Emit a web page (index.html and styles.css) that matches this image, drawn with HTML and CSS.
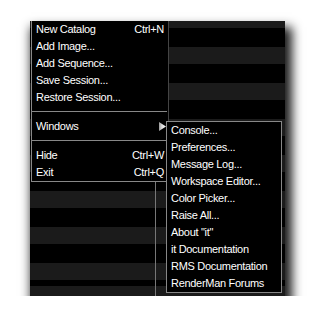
FILE: index.html
```html
<!DOCTYPE html>
<html lang="en">
<head>
<meta charset="UTF-8">
<meta name="viewport" content="width=device-width, initial-scale=1.0">
<title>it - Menu</title>
<link rel="stylesheet" href="styles.css">
</head>
<body>
    <div class="window">
        <div class="table">
            <div class="col-name"></div>
            <div class="col-rest"></div>
        </div>

        <div class="menu main-menu">
            <div class="item"><span>New Catalog</span><span class="key">Ctrl+N</span></div>
            <div class="item"><span>Add Image...</span></div>
            <div class="item"><span>Add Sequence...</span></div>
            <div class="item"><span>Save Session...</span></div>
            <div class="item"><span>Restore Session...</span></div>
            <div class="sep"></div>
            <div class="item sub">
                <span>Windows</span>
                <svg class="arrow" width="7" height="9" viewBox="0 0 7 9">
                    <defs>
                        <linearGradient id="arrowShade" x1="0" x2="1" y1="0" y2="0">
                            <stop offset="0" stop-color="#9a9a9a"/>
                            <stop offset="0.4" stop-color="#d8d8d8"/>
                            <stop offset="1" stop-color="#ffffff"/>
                        </linearGradient>
                    </defs>
                    <polygon points="0,0 7,4.5 0,9" fill="url(#arrowShade)"/>
                </svg>
            </div>
            <div class="sep"></div>
            <div class="item"><span>Hide</span><span class="key">Ctrl+W</span></div>
            <div class="item"><span>Exit</span><span class="key">Ctrl+Q</span></div>
        </div>

        <div class="menu sub-menu">
            <div class="item"><span>Console...</span></div>
            <div class="item"><span>Preferences...</span></div>
            <div class="item"><span>Message Log...</span></div>
            <div class="item"><span>Workspace Editor...</span></div>
            <div class="item"><span>Color Picker...</span></div>
            <div class="item"><span>Raise All...</span></div>
            <div class="item"><span>About "it"</span></div>
            <div class="item"><span>it Documentation</span></div>
            <div class="item"><span>RMS Documentation</span></div>
            <div class="item"><span>RenderMan Forums</span></div>
        </div>
    </div>
</body>
</html>
```

FILE: styles.css
```css
body {
    margin: 0;
    background: #fff;
    font-family: "Liberation Sans", Arial, sans-serif;
}
.window {
    position: relative;
    margin: 21px 0 0 30px;
    width: 255px;
    height: 275px;
    background: repeating-linear-gradient(to bottom, #1b1b1b 0 17px, #000 17px 36px);
    background-position: 0 -10px;
    box-shadow: 4px 9px 10px 3px rgba(0, 0, 0, 0.9);
}
.table {
    display: flex;
    height: 100%;
}
.col-name {
    width: 125px;
    border-right: 1px solid #777;
}
.col-rest {
    flex: 1;
}
.menu {
    position: absolute;
    background: #000;
}
.main-menu {
    left: 1px;
    top: 0;
    width: 136px;
    border: 1px solid #888;
    border-top: 0;
    border-right-color: #444;
}
.sub-menu {
    left: 136px;
    top: 100px;
    width: 114px;
    border: 1px solid #888;
}
.item {
    display: flex;
    justify-content: space-between;
    align-items: center;
    height: 17px;
    line-height: 17px;
    padding: 0 4px;
    color: #fff;
    font-size: 11px;
    letter-spacing: -0.3px;
    white-space: nowrap;
}
.item.sub {
    padding-right: 2px;
}
.arrow {
    display: block;
}
.sep {
    height: 5px;
    margin: 0 1px 6px 0;
    border-bottom: 1px solid #888;
}
```
